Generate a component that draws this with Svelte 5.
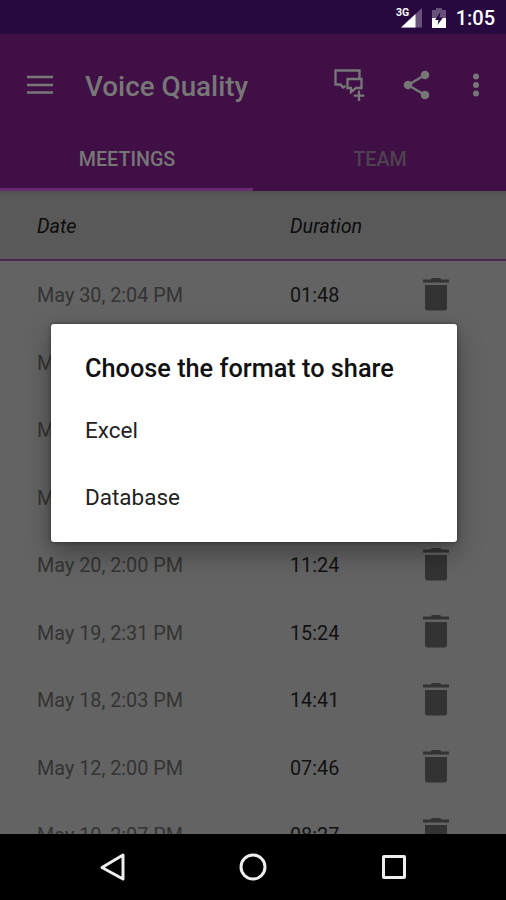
<script>
  let activeTab = "Meetings";
  const tabs = ["Meetings", "Team"];
  const formats = ["Excel", "Database"];

  const meetings = [
    { date: "May 30, 2:04 PM", duration: "01:48" },
    { date: "May 27, 2:00 PM", duration: "12:10" },
    { date: "May 26, 2:31 PM", duration: "14:05" },
    { date: "May 23, 2:02 PM", duration: "10:37" },
    { date: "May 20, 2:00 PM", duration: "11:24" },
    { date: "May 19, 2:31 PM", duration: "15:24" },
    { date: "May 18, 2:03 PM", duration: "14:41" },
    { date: "May 12, 2:00 PM", duration: "07:46" },
    { date: "May 10, 2:07 PM", duration: "08:27" },
  ];
</script>

<div class="phone">
  <!-- Status bar -->
  <div class="status">
    <svg width="28" height="22" viewBox="0 0 28 22">
      <path d="M26 1v19.500H5z" fill="#68517a" />
      <path d="M19.500 7v13.500H5z" fill="#fff" />
      <text x="0" y="9" class="network">3G</text>
    </svg>
    <svg class="battery" width="14" height="20" viewBox="0 0 14 20">
      <path d="M4 0h6v2h4v9H0V2h4z" fill="#68517a" />
      <path d="M0 10h14v10H0z" fill="#fff" />
      <path d="M8.500 4L3 12h3.500L5.500 17L11 9.500H7.500z" fill="#28093f" />
    </svg>
    <span class="clock">1:05</span>
  </div>

  <!-- App bar -->
  <header>
    <div class="toolbar">
      <svg class="menu" width="28" height="20" viewBox="0 0 28 20">
        <path d="M1 2h26M1 10h26M1 17.500h26" stroke="#777" stroke-width="2.600" />
      </svg>
      <h1>Voice Quality</h1>
      <svg class="chat" width="32" height="34" viewBox="0 0 32 34" fill="none" stroke="#777" stroke-width="2.300">
        <path d="M12.500 18L10 19.500L7.500 16.500H2.500V2.500H26.500V11" />
        <path d="M14.500 11H28.500V20H23L18 24V20H14.500z" />
        <path d="M26 22.500v10.500M20.800 27.700h10.500" />
      </svg>
      <svg class="share" width="27" height="30" viewBox="0 0 27 30" fill="#777">
        <path d="M22 5L5 15l17 10" fill="none" stroke="#777" stroke-width="2.400" />
        <circle cx="22" cy="5" r="4.300" />
        <circle cx="5" cy="15" r="4.300" />
        <circle cx="22" cy="25" r="4.300" />
      </svg>
      <svg class="more" width="8" height="26" viewBox="0 0 8 26" fill="#777">
        <circle cx="4" cy="4.500" r="3" />
        <circle cx="4" cy="13" r="3" />
        <circle cx="4" cy="21.500" r="3" />
      </svg>
    </div>
    <nav>
      {#each tabs as tab}
        <button class:active={tab === activeTab} on:click={() => (activeTab = tab)}>{tab}</button>
      {/each}
    </nav>
  </header>

  <!-- Meeting list -->
  <div class="row heading">
    <span>Date</span>
    <span>Duration</span>
  </div>
  <div class="list">
    {#each meetings as m}
      <div class="row">
        <span class="date">{m.date}</span>
        <span class="duration">{m.duration}</span>
        <svg width="28" height="34" viewBox="0 0 28 34" fill="#333">
          <path d="M1 1.500h7.500L10 0h8l1.500 1.500H27v3H1z" />
          <path d="M3 7h22v23q0 2.500-2.500 2.500h-17Q3 32.500 3 30z" />
        </svg>
      </div>
    {/each}
  </div>

  <!-- System navigation -->
  <footer>
    <svg width="28" height="30" viewBox="0 0 28 30">
      <path d="M24 3L3 15.500L24 27z" />
    </svg>
    <svg width="28" height="30" viewBox="0 0 28 30">
      <circle cx="14" cy="15" r="12" />
    </svg>
    <svg width="28" height="30" viewBox="0 0 28 30">
      <rect x="3.500" y="4.500" width="21" height="21" rx="0.500" />
    </svg>
  </footer>

  <!-- Share dialog -->
  <div class="dialog">
    <h2>Choose the format to share</h2>
    {#each formats as format}
      <div class="option">{format}</div>
    {/each}
  </div>
</div>

<style>
  :global(body) {
    margin: 0;
    font-family: Roboto, "Noto Sans", sans-serif;
  }

  .phone {
    position: relative;
    display: flex;
    flex-direction: column;
    width: 506px;
    height: 900px;
    overflow: hidden;
    background: #636363;
  }

  svg {
    display: block;
    flex: none;
  }

  .status {
    display: flex;
    align-items: center;
    justify-content: flex-end;
    box-sizing: border-box;
    height: 34px;
    flex: none;
    padding: 2px 11px 0 0;
    background: #28093f;
    color: #fff;
  }

  .network {
    font-size: 10.500px;
    font-weight: 700;
    fill: #fff;
  }

  .battery {
    margin: 0 10px 0 8px;
  }

  .clock {
    font-size: 20px;
    font-weight: 500;
  }

  header {
    flex: none;
    height: 157px;
    background: #400f45;
  }

  .toolbar {
    display: flex;
    align-items: center;
    height: 92px;
    box-sizing: border-box;
    padding: 10px 26px 0;
  }

  .menu {
    margin-left: -0.500px;
  }

  h1 {
    flex: 1;
    margin: 3px 0 0 31.500px;
    font-size: 27.800px;
    line-height: 32px;
    font-weight: 500;
    color: #777;
    white-space: nowrap;
  }

  .share {
    margin: 0 42px 0 38px;
  }

  nav {
    display: flex;
    height: 65px;
  }

  nav button {
    flex: 1;
    padding: 5px 0 0 1px;
    border: 0;
    border-bottom: 3px solid transparent;
    background: none;
    font: 500 19.700px Roboto, sans-serif;
    text-transform: uppercase;
    color: #4d424e;
  }

  nav button.active {
    color: #777;
    border-color: #6b2b73;
  }

  .row {
    display: grid;
    grid-template-columns: 253px 132px 28px;
    align-items: center;
    box-sizing: border-box;
    height: 67.500px;
    padding-left: 37px;
    font-size: 19.800px;
  }

  .row span {
    padding-top: 1.500px;
  }

  .heading {
    flex: none;
    height: 70px;
    border-bottom: 2px solid #4a2850;
    background: linear-gradient(#505050, #595959 6px);
    font-style: italic;
    color: #0c0c0c;
  }

  .heading span {
    padding-top: 3px;
  }

  .list {
    flex: 1;
    min-height: 0;
    overflow: hidden;
  }

  .date {
    color: #333;
  }

  .duration {
    color: #111;
  }

  footer {
    display: flex;
    justify-content: center;
    align-items: center;
    gap: 112.500px;
    height: 66.500px;
    flex: none;
    background: #000;
  }

  footer svg {
    fill: none;
    stroke: #eee;
    stroke-width: 3;
    stroke-linejoin: round;
  }

  .dialog {
    position: absolute;
    left: 51px;
    top: 324px;
    width: 405.500px;
    height: 218px;
    box-sizing: border-box;
    padding: 26px 34px 0;
    border-radius: 3px;
    background: #fff;
    box-shadow: 0 11px 26px rgba(0, 0, 0, 0.35), 0 0 4px rgba(0, 0, 0, 0.4);
  }

  h2 {
    margin: 0;
    font-size: 25.300px;
    line-height: 38px;
    font-weight: 500;
    color: #111;
    white-space: nowrap;
  }

  .option {
    display: flex;
    align-items: center;
    height: 67.500px;
    margin-top: -0.500px;
    font-size: 22.500px;
    color: #222;
  }

  h2 + .option {
    margin-top: 8px;
  }
</style>
